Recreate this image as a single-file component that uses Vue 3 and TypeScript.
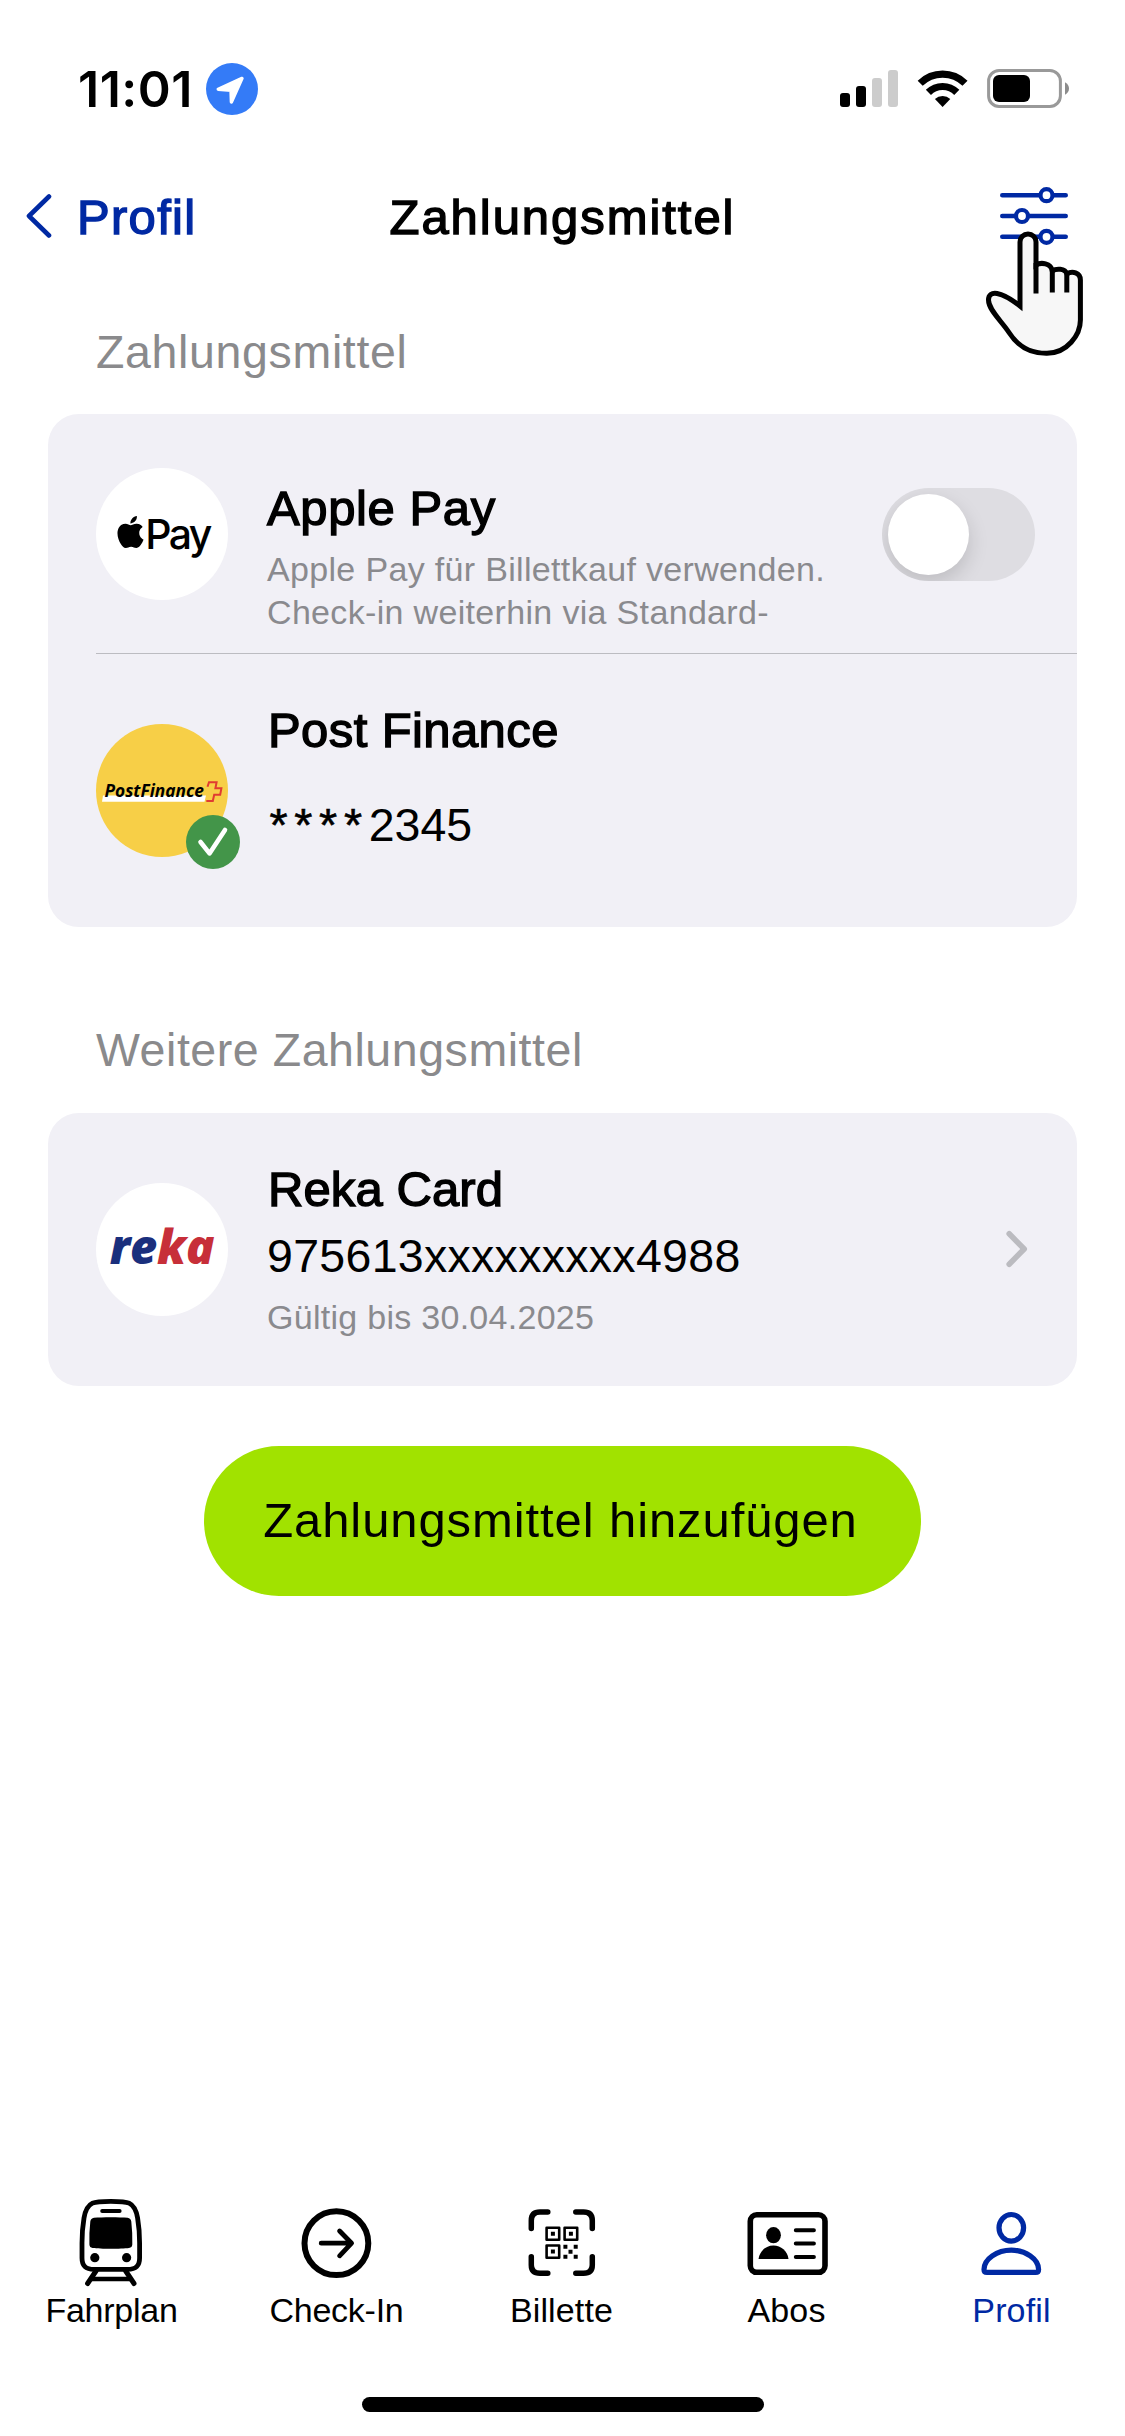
<script setup lang="ts">
import { ref } from 'vue'

type TabId = 'fahrplan' | 'checkin' | 'billette' | 'abos' | 'profil'

interface Tab {
  id: TabId
  label: string
}

const tabs: Tab[] = [
  { id: 'fahrplan', label: 'Fahrplan' },
  { id: 'checkin', label: 'Check-In' },
  { id: 'billette', label: 'Billette' },
  { id: 'abos', label: 'Abos' },
  { id: 'profil', label: 'Profil' },
]

const activeTab = ref<TabId>('profil')
const applePay = ref(false)
</script>

<template>
  <div class="screen">
    <div class="status">
      <div class="status-left">
        <span class="clock">11:01</span>
        <svg class="location" viewBox="0 0 52 52">
          <circle cx="26" cy="26" r="26" fill="#347bf7" />
          <path d="M12.2 26.2 L36 15.4 L25.4 39 L25 27.2 Z" fill="#fff" stroke="#fff" stroke-width="3.4" stroke-linejoin="round" />
        </svg>
      </div>
      <svg class="status-right" viewBox="0 0 230 40">
        <rect x="0" y="24" width="10" height="14" rx="3" />
        <rect x="16" y="17" width="10" height="21" rx="3" />
        <rect x="32" y="9" width="10" height="29" rx="3" fill="#ccc" />
        <rect x="48" y="1" width="10" height="37" rx="3" fill="#ccc" />
        <g fill="none" stroke="#000" stroke-width="7.2">
          <path d="M80.2 14.3 A32 32 0 0 1 125 14.3" />
          <path d="M88.4 23.4 A20 20 0 0 1 116.8 23.4" />
        </g>
        <path d="M102.6 38 L94.9 29.9 A11.5 11.5 0 0 1 110.3 29.9 Z" />
        <rect x="148.6" y="1.6" width="71.8" height="35.8" rx="10.5" fill="none" stroke="#999" stroke-width="3" />
        <rect x="153" y="6" width="37" height="27" rx="6" />
        <path d="M225 13.2 Q229 15.5 229 19.5 Q229 23.5 225 25.8 Z" fill="#8c8c8c" />
      </svg>
    </div>

    <header class="nav">
      <button class="back">
        <svg class="back-icon" viewBox="0 0 26 44">
          <path d="M23 2.5 L3 22 L23 41.5" fill="none" stroke="#0029a3" stroke-width="4.6" stroke-linecap="round" stroke-linejoin="round" />
        </svg>
        <span class="back-label">Profil</span>
      </button>
      <h1 class="title">Zahlungsmittel</h1>
      <div class="filter">
        <svg class="filter-icon" viewBox="0 0 68 58">
          <g stroke="#0029a3" stroke-width="4.6" stroke-linecap="round">
            <path d="M2.3 8.2 H65.7 M2.3 29 H65.7 M2.3 49.8 H65.7" />
            <g fill="#fff" stroke-width="4.2">
              <circle cx="46.5" cy="8.2" r="6" />
              <circle cx="22" cy="29" r="6" />
              <circle cx="46.5" cy="49.8" r="6" />
            </g>
          </g>
        </svg>
        <svg class="hand" viewBox="0 0 98 126">
          <g stroke="#000" stroke-width="5">
            <path d="M34 75 V11 A8 8 0 0 1 50 11 V34 C55 31 65 32 66.3 40 C70 37.4 79 37 81 43 C86 39.5 94.4 41.5 94.4 49 V89 C94.4 104 81 122.3 61 122.3 C44 122.5 31 114 23 101.5 C16 90.5 2.5 79 2.5 69 C2.5 58.5 15 60 34 75 Z" fill="#f7f7f7" />
            <path d="M50 32 V62.5 M66.3 38 V61.5 M80.8 42 V61.5" fill="none" />
          </g>
        </svg>
      </div>
    </header>

    <h2 class="section-label">Zahlungsmittel</h2>
    <section class="card">
      <div class="row row-apple">
        <div class="avatar">
          <svg class="apple" viewBox="2 0 20 24">
            <path d="M12.152 6.896c-.948 0-2.415-1.078-3.96-1.04-2.04.027-3.91 1.183-4.961 3.014-2.117 3.675-.546 9.103 1.519 12.09 1.013 1.454 2.208 3.09 3.792 3.039 1.52-.065 2.09-.987 3.935-.987 1.831 0 2.35.987 3.96.948 1.637-.026 2.676-1.48 3.676-2.948 1.156-1.688 1.636-3.325 1.662-3.415-.039-.013-3.182-1.221-3.22-4.857-.026-3.04 2.48-4.494 2.597-4.559-1.429-2.09-3.623-2.324-4.39-2.376-2-.156-3.675 1.09-4.61 1.09zM15.53 3.83c.843-1.012 1.4-2.427 1.245-3.83-1.207.052-2.662.805-3.532 1.818-.78.896-1.454 2.338-1.273 3.714 1.338.104 2.715-.688 3.559-1.701" />
          </svg>
          <span class="apple-pay">Pay</span>
        </div>
        <div class="info">
          <div class="name name-apple">Apple Pay</div>
          <div class="hint">Apple Pay für Billettkauf verwenden.<br />Check-in weiterhin via Standard-</div>
        </div>
        <button class="toggle" :class="{ on: applePay }" @click="applePay = !applePay">
          <span class="knob"></span>
        </button>
      </div>
      <div class="divider"></div>
      <div class="row row-post">
        <div class="avatar avatar-post">
          <svg class="post-logo" viewBox="0 0 132 132">
            <path d="M7 70.5 H110 L108.5 76.8 H6 Z" fill="#fff" />
            <text x="8.5" y="71.8" class="post-text" textLength="99.5" lengthAdjust="spacingAndGlyphs">PostFinance</text>
            <path d="M111.5 61.8 L113 57.2 H120.6 L119.4 63.2 H125.4 L124.2 69.8 H118.2 L116.8 76 H110.3" fill="none" stroke="#e03c31" stroke-width="2" />
          </svg>
          <svg class="badge" viewBox="0 0 54 54">
            <circle cx="27" cy="27" r="27" fill="#439549" />
            <path d="M14.5 27 L23.5 38.4 L39 15" fill="none" stroke="#fff" stroke-width="4.6" stroke-linecap="round" stroke-linejoin="round" />
          </svg>
        </div>
        <div class="info">
          <div class="name name-post">Post Finance</div>
          <div class="number number-post"><span class="mask">****</span>2345</div>
        </div>
      </div>
    </section>

    <h2 class="section-label label-more">Weitere Zahlungsmittel</h2>
    <section class="card card-reka">
      <div class="row row-reka">
        <div class="avatar avatar-reka">
          <span class="reka"><span class="re">re</span><span class="ka">ka</span></span>
        </div>
        <div class="info">
          <div class="name name-reka">Reka Card</div>
          <div class="number number-reka">975613xxxxxxxxx4988</div>
          <div class="hint hint-reka">Gültig bis 30.04.2025</div>
        </div>
        <svg class="chevron" viewBox="0 0 22 38">
          <path d="M3.2 3.8 L18.2 19 L3.2 34.2" fill="none" stroke="#bbbbc0" stroke-width="5.6" stroke-linecap="round" stroke-linejoin="round" />
        </svg>
      </div>
    </section>

    <button class="add">Zahlungsmittel hinzufügen</button>

    <nav class="tabs">
      <button
        v-for="tab in tabs"
        :key="tab.id"
        class="tab"
        :class="[tab.id, { active: tab.id === activeTab }]"
        @click="activeTab = tab.id"
      >
        <svg class="tab-icon" viewBox="0 0 90 90" fill="none" stroke="currentColor" stroke-linecap="round" stroke-linejoin="round">
          <template v-if="tab.id === 'fahrplan'">
            <path stroke-width="4.8" d="M43.8 3.4 C34 3.4 28.5 3.8 25.5 5.2 C20 7.8 18.2 13 17 20 C15.5 29 15 36 15 45 V60 C15 68 19 71.3 27 71.3 H60.6 C68.6 71.3 72.6 68 72.6 60 V45 C72.6 36 72.1 29 70.6 20 C69.4 13 67.6 7.8 62.1 5.2 C59.1 3.8 53.6 3.4 43.8 3.4 Z" />
            <path stroke-width="4" d="M35.2 13 H52.6" />
            <path fill="currentColor" stroke="none" d="M27 19.8 C35 19 52.6 19 60.6 19.8 Q63.8 20.2 64.3 23.5 Q65.6 35 65.3 46.5 Q65.2 49.5 62 50 C54 51 33.6 51 25.6 50 Q22.5 49.5 22.4 46.5 Q22 35 23.3 23.5 Q23.8 20.2 27 19.8 Z" />
            <g fill="currentColor" stroke="none">
              <circle cx="27.8" cy="59.7" r="4.6" />
              <circle cx="59.6" cy="59.7" r="4.6" />
            </g>
            <path stroke-width="5" d="M29 73 L20.6 85.5 M58.7 73 L67 85.5" />
            <path stroke-width="4.6" d="M25 81 H62.5" />
          </template>
          <template v-else-if="tab.id === 'checkin'">
            <circle cx="44.4" cy="45.2" r="31.9" stroke-width="6" />
            <path stroke-width="4.8" d="M29.2 45.2 H59 M47.6 33 L59.6 45.2 L47.6 57.8" />
          </template>
          <template v-else-if="tab.id === 'billette'">
            <path stroke-width="5.5" d="M29.8 14 H22 Q13.3 14 13.3 22.5 V30.6 M57.8 14 H65.5 Q74.3 14 74.3 22.5 V30.6 M13.3 58.8 V67 Q13.3 75.3 22 75.3 H29.8 M74.3 58.8 V67 Q74.3 75.3 65.5 75.3 H57.8" />
            <path stroke-width="2.6" d="M28.6 29.7 H41.2 V41.8 H28.6 Z M46.6 29.7 H59.2 V41.8 H46.6 Z M28.6 47.5 H41.2 V59.7 H28.6 Z" />
            <path fill="currentColor" stroke="none" d="M32.9 33.7 h4 v4 h-4 Z M50.9 33.7 h4 v4 h-4 Z M32.9 51.6 h4 v4 h-4 Z M45.4 46.8 h4 v4 h-4 Z M55.7 46.8 h4 v4 h-4 Z M50.5 51.8 h4 v4 h-4 Z M45.4 56.8 h4 v4 h-4 Z M55.7 56.8 h4 v4 h-4 Z" />
          </template>
          <template v-else-if="tab.id === 'abos'">
            <rect x="7.3" y="16.8" width="74.7" height="57.5" rx="6.5" stroke-width="5.6" />
            <ellipse cx="30.5" cy="37.2" rx="7.4" ry="8.1" fill="currentColor" stroke="none" />
            <path fill="currentColor" stroke="none" d="M30.5 47.5 C38 47.5 44.5 53 45.5 61 H15.5 C16.5 53 23 47.5 30.5 47.5 Z" />
            <path stroke-width="4" d="M52.8 32.2 H70.9 M52.8 45.5 H70.9 M52.8 59 H70.9" />
          </template>
          <template v-else>
            <ellipse cx="44.3" cy="29.8" rx="12.3" ry="13.3" stroke-width="5.2" />
            <path stroke-width="5.2" d="M44.3 52.2 C58.5 52.2 71.6 61 71.6 71.5 C71.6 73.6 70.6 74.4 68.6 74.4 H20 C18 74.4 17 73.6 17 71.5 C17 61 30.1 52.2 44.3 52.2 Z" />
          </template>
        </svg>
        <span class="tab-label">{{ tab.label }}</span>
      </button>
    </nav>
    <div class="home-bar"></div>
  </div>
</template>

<style>
body {
  margin: 0;
  background: #fff;
}
</style>

<style scoped>
.screen {
  display: flex;
  flex-direction: column;
  box-sizing: border-box;
  width: 1125px;
  height: 2436px;
  padding-bottom: 24px;
  overflow: hidden;
  background: #fff;
  color: #000;
  font-family: "Liberation Sans", Arial, sans-serif;
}

button {
  padding: 0;
  border: 0;
  background: none;
  color: inherit;
  font: inherit;
}

svg {
  display: block;
  flex: none;
}

.status {
  display: flex;
  align-items: center;
  justify-content: space-between;
  box-sizing: border-box;
  height: 140px;
  padding: 38px 55px 0 78px;
}

.status-left {
  display: flex;
  align-items: center;
}

.clock {
  width: 128px;
  font: 600 50px/60px Inter, sans-serif;
  letter-spacing: 0.5px;
  white-space: nowrap;
}

.location {
  width: 52px;
  height: 52px;
}

.status-right {
  width: 230px;
  height: 40px;
}

.nav {
  display: grid;
  grid-template-columns: 1fr auto 1fr;
  align-items: center;
  height: 152px;
  padding: 0 57px 0 26px;
}

.back {
  display: flex;
  align-items: center;
  gap: 25px;
  color: #0029a3;
  font-size: 49px;
  line-height: 60px;
  letter-spacing: 1.3px;
  -webkit-text-stroke: 1.4px currentColor;
}

.back-icon {
  width: 26px;
  height: 44px;
}

.back-label,
.title {
  padding-top: 2px;
}

.title {
  margin: 0 0 0 31px;
  font-size: 49px;
  font-weight: 400;
  line-height: 60px;
  letter-spacing: 1.95px;
  -webkit-text-stroke: 1.4px currentColor;
}

.filter {
  position: relative;
  justify-self: end;
}

.filter-icon {
  width: 68px;
  height: 58px;
}

.hand {
  position: absolute;
  top: 44px;
  left: -14px;
  width: 98px;
  height: 126px;
}

.section-label {
  margin: 30px 0 32px 96px;
  color: #8a8a8c;
  font-size: 46.5px;
  font-weight: 400;
  line-height: 60px;
  letter-spacing: 0.65px;
}

.label-more {
  margin-top: 93px;
  margin-bottom: 33px;
  letter-spacing: 0.55px;
}

.card {
  margin: 0 48px;
  border-radius: 31px;
  background: #f1f0f6;
}

.row {
  display: flex;
  align-items: flex-start;
  padding: 0 42px 0 48px;
}

.row-apple {
  height: 239px;
}

.row-post {
  height: 273px;
}

.row-reka {
  height: 273px;
}

.divider {
  height: 1px;
  margin-left: 48px;
  background: #bcbcc1;
}

.avatar {
  position: relative;
  display: flex;
  align-items: center;
  justify-content: center;
  flex: none;
  width: 132px;
  height: 132px;
  margin: 54px 39px 0 0;
  border-radius: 50%;
  background: #fff;
}

.avatar-post {
  height: 133px;
  margin-top: 70px;
  background: #f7cf47;
}

.avatar-reka {
  height: 133px;
  margin-top: 70px;
}

.apple {
  width: 27px;
  height: 32px;
  margin-right: 1px;
  margin-bottom: 4px;
  margin-left: 3px;
}

.apple-pay {
  font: 500 41px/48px Inter, sans-serif;
  letter-spacing: -2.6px;
}

.post-logo {
  width: 132px;
  height: 132px;
}

.post-text {
  font: italic 700 18.5px "Open Sans", sans-serif;
}

.badge {
  position: absolute;
  top: 91px;
  left: 90px;
  width: 54px;
  height: 54px;
}

.reka {
  padding-bottom: 7px;
  font: italic 800 47px/60px "Open Sans", sans-serif;
  letter-spacing: -0.2px;
}

.re {
  color: #1a2f7d;
}

.ka {
  color: #c72f39;
}

.info {
  flex: 1;
  padding-top: 64px;
  white-space: nowrap;
}

.row-post .info {
  padding-top: 46px;
}

.row-reka .info {
  padding-top: 46px;
}

.name {
  font-size: 49px;
  line-height: 60px;
  -webkit-text-stroke: 1.4px currentColor;
}

.name-apple {
  letter-spacing: 0.6px;
}

.name-post {
  padding-left: 1px;
  letter-spacing: 0.4px;
}

.name-reka {
  padding-left: 1px;
  letter-spacing: 0.1px;
}

.hint {
  margin-top: 10px;
  color: #8a8a8e;
  font-size: 34px;
  line-height: 43px;
  letter-spacing: 0.33px;
}

.hint-reka {
  letter-spacing: 0.28px;
}

.number {
  font-size: 46.5px;
  line-height: 60px;
}

.number-post {
  margin-top: 35px;
  letter-spacing: 0;
}

.mask {
  margin-left: 2.5px;
  letter-spacing: 6.7px;
  -webkit-text-stroke: 0.6px currentColor;
}

.number-reka {
  margin-top: 7px;
  letter-spacing: 0.3px;
}

.toggle {
  flex: none;
  box-sizing: border-box;
  width: 153px;
  height: 93px;
  margin-top: 74px;
  padding: 6px;
  border-radius: 47px;
  background: #dedde2;
  overflow: hidden;
}

.toggle.on {
  background: #34c759;
}

.knob {
  display: block;
  width: 81px;
  height: 81px;
  border-radius: 50%;
  background: #fff;
  box-shadow: 0 8px 20px rgba(0, 0, 0, 0.15);
}

.toggle.on .knob {
  margin-left: auto;
}

.chevron {
  width: 22px;
  height: 38px;
  margin-top: 117px;
  margin-right: 7px;
}

.add {
  align-self: center;
  width: 717px;
  height: 150px;
  margin-top: 60px;
  padding-right: 4px;
  padding-bottom: 2px;
  border-radius: 75px;
  background: #a1e200;
  font-size: 49px;
  line-height: 60px;
  letter-spacing: 0.9px;
}

.tabs {
  display: flex;
  margin-top: auto;
  margin-left: -1px;
}

.tab {
  display: flex;
  flex-direction: column;
  align-items: center;
  width: 225px;
}

.tab-icon {
  width: 90px;
  height: 90px;
}

.billette .tab-icon,
.abos .tab-icon {
  margin-left: 2px;
}

.tab-label {
  margin-top: 2px;
  font-size: 34px;
  line-height: 40px;
  letter-spacing: 0.15px;
}

.fahrplan .tab-label,
.checkin .tab-label {
  letter-spacing: -0.25px;
}

.tab.active {
  color: #0029a3;
}

.home-bar {
  align-self: center;
  width: 402px;
  height: 15px;
  margin-top: 67px;
  border-radius: 8px;
  background: #000;
}
</style>
